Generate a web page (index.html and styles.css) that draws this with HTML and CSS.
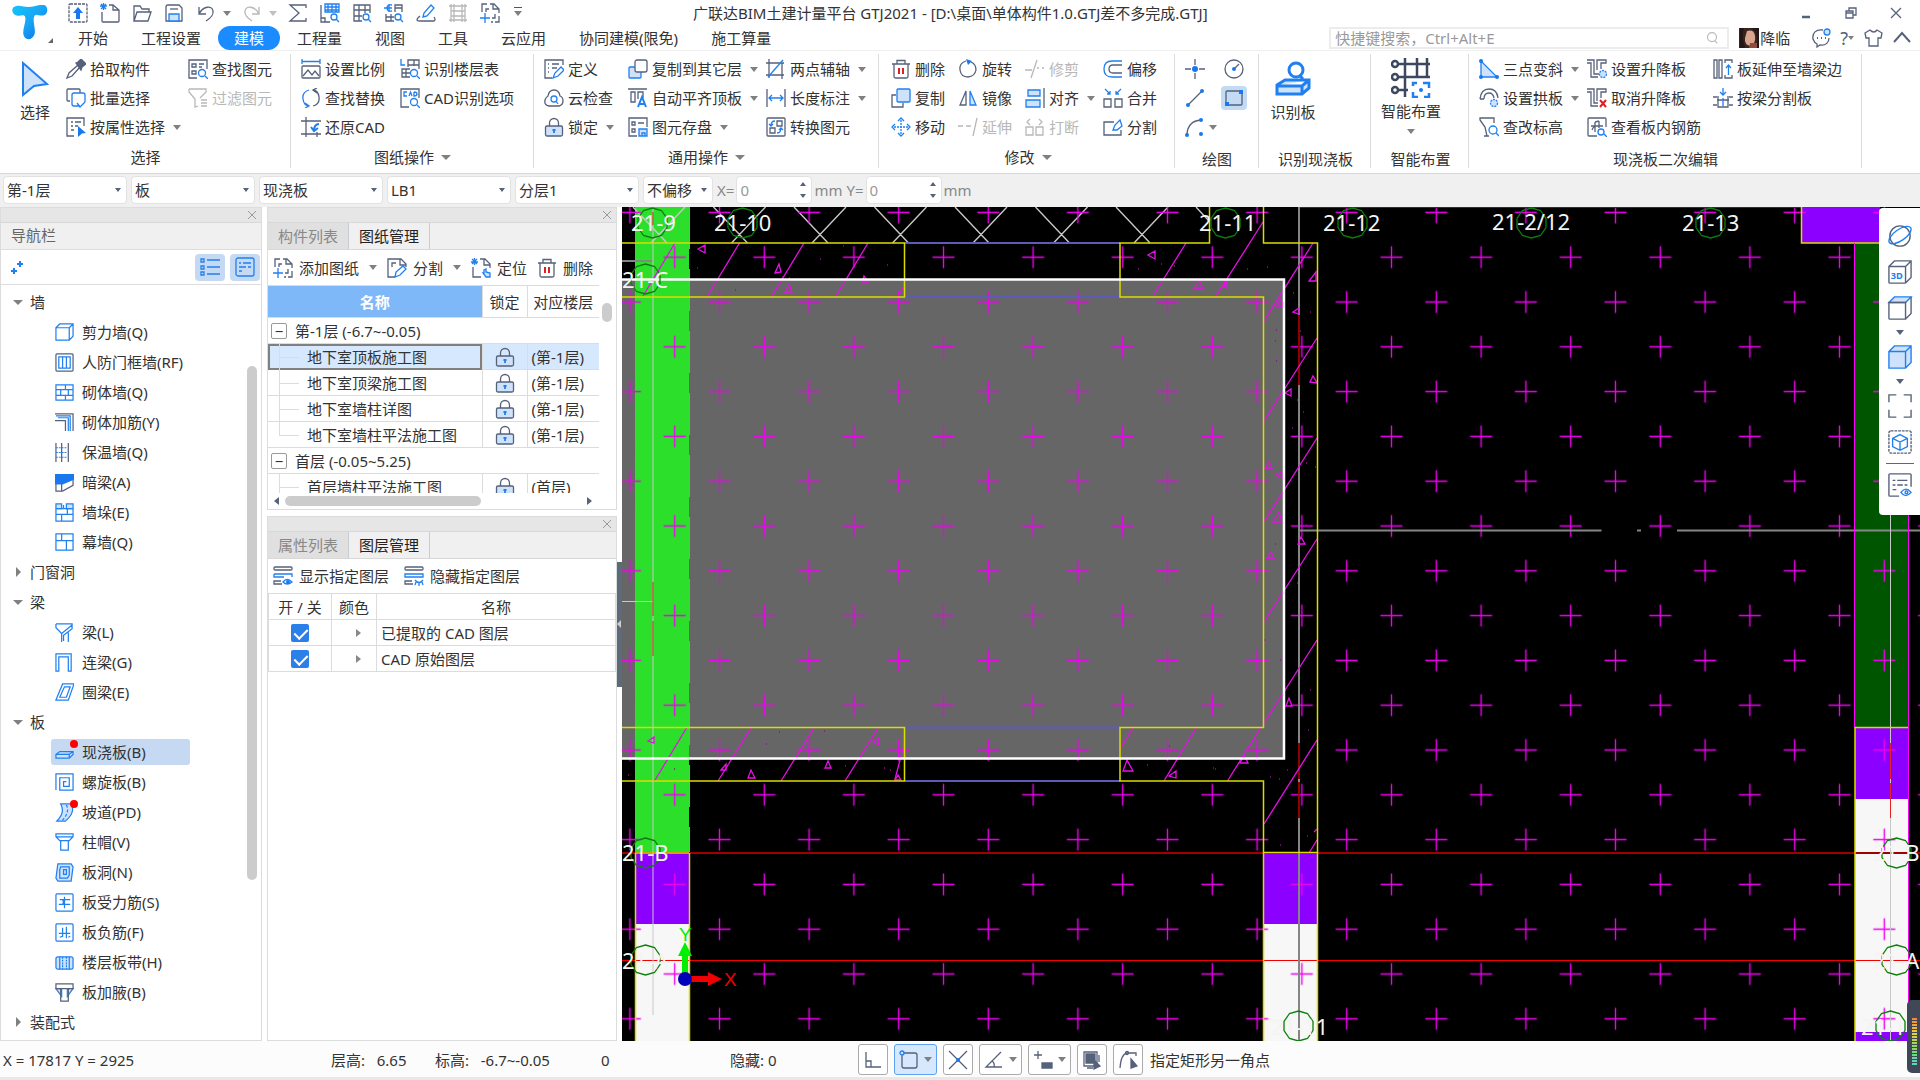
FILE: index.html
```html
<!DOCTYPE html>
<html lang="zh-CN">
<head>
    <meta charset="UTF-8">
    <meta name="viewport" content="width=device-width, initial-scale=1.0">
    <title>广联达BIM土建计量平台 GTJ2021</title>
    <link rel="stylesheet" href="styles.css">
</head>
<body>

    <!-- Shared icons -->
    <svg class="sprite" aria-hidden="true">
        <symbol id="i-lock" viewBox="0 0 20 20"><path d="M5.500 9V6a4.500 4.500 0 0 1 9 0v3"/><rect class="pale" x="1.500" y="9" width="17" height="10" rx="1.500"/><path class="b" stroke-width="1.800" d="M10 12v4M8.500 13h3"/></symbol>
        <symbol id="i-trash" viewBox="0 0 20 20"><path d="M1 5h18M6 5V1.500h8V5M3 5v12.500q0 1.500 1.500 1.500h11q1.500 0 1.500-1.500V5"/><path class="r" d="M8 9v6M12 9v6"/></symbol>
        <symbol id="i-addpage" viewBox="0 0 20 20"><path d="M2 9V1h5M10 1h4l5 5v4M13 1v5h6M19 13v6h-4M13 19h-2M6 9V6h3M15 11v4h-3"/><path class="b" d="M0 15h10M5 10v10"/></symbol>
        <symbol id="i-close" viewBox="0 0 10 10"><path d="M1 1l8 8M9 1L1 9"/></symbol>
    </svg>

    <!-- Title and menu -->
    <header class="top">
        <a class="logo" href="#" aria-label="GTJ">
            <svg viewBox="0 0 38 38">
                <defs><linearGradient id="logo-fill" x1="0" y1="0" x2="1" y2="1"><stop offset="0" stop-color="#15c5f8"/><stop offset=".5" stop-color="#18a5f5"/><stop offset="1" stop-color="#0867f0"/></linearGradient></defs>
                <path fill="url(#logo-fill)" d="M2 2C7-1 12 2 17 2 24 2 29-1 34 0c5 2 4 10-1 11-4 1-7-2-9 0-3 4 1 14 0 19-2 8-11 8-12 1-1-6 3-13 2-18-1-4-5-1-9-2C0 10-1 4 2 2z"/>
            </svg>
        </a>
        <div class="top-rows">
            <div class="titlebar">
                <div class="quick">
                    <button aria-label="上传"><svg class="ico" viewBox="0 0 20 20"><rect x="1" y="1" width="18" height="18" rx="1" stroke-dasharray="3 1"/><path class="bs" d="M10 4l5 6h-3v6H8v-6H5z"/></svg></button>
                    <button aria-label="新建"><svg class="ico" viewBox="0 0 20 20"><path d="M9 2h4l6 5v11q0 1-1 1H3q-1 0-1-1V9M13 2v5h6"/><path class="b" d="M0 3h7M3.500 0v7M1 1l5 5M6 1L1 6"/></svg></button>
                    <button aria-label="打开"><svg class="ico" viewBox="0 0 20 20"><path d="M2 18V3h6l2 3h7v3M2 18L5 9h14l-3 9z"/></svg></button>
                    <button aria-label="保存"><svg class="ico" viewBox="0 0 20 20"><path d="M2 18V4q0-2 2-2h11l3 3v13z"/><path class="bf" d="M5 18v-7h10v7z"/><path d="M6 6h8"/></svg></button>
                    <button aria-label="撤销"><svg class="ico" viewBox="0 0 20 20"><path d="M3 4v7h7M3 11C7 3 16 2 17 8q1 5-7 10"/></svg></button>
                    <i class="caret"></i>
                    <button aria-label="恢复"><svg class="ico off" viewBox="0 0 20 20"><path d="M17 4v7h-7M17 11C13 3 4 2 3 8q-1 5 7 10"/></svg></button>
                    <i class="caret off"></i>
                    <button aria-label="汇总"><svg class="ico" viewBox="0 0 20 20"><path d="M18 5V2H2l9 8-9 8h16v-3"/></svg></button>
                    <button aria-label="查看工程量"><svg class="ico" viewBox="0 0 20 20"><path d="M1 2v17h9M1 15h4v4"/><path class="b" d="M5 1h14v8H5zM5 4h14M5 7h14M8 1v8M12 1v8M16 1v8"/><circle class="b" cx="14" cy="14" r="3"/><path class="b" d="M16 16l3 3"/></svg></button>
                    <button aria-label="表格"><svg class="ico" viewBox="0 0 20 20"><path d="M10 18H2V2h16v8M2 7h16M2 13h8M7 2v16M13 2v8"/><circle class="b" cx="14" cy="14" r="3"/><path class="b" d="M16 16l3 3"/></svg></button>
                    <button aria-label="查看钢筋"><svg class="ico" viewBox="0 0 20 20"><path d="M11 9V2h7v7M2 11v7h8M2 14h8M7 11v7M11 5h7"/><path class="b" d="M0 5h8M5 1v8M8 2q-5-1-5 3t5 3"/><circle class="b" cx="14" cy="14" r="3"/><path class="b" d="M16 16l3 3"/></svg></button>
                    <button aria-label="编辑"><svg class="ico" viewBox="0 0 20 20"><path class="b" d="M7 14l1-4 7-8 3 3-7 8z"/><path d="M4 13q-6 5 0 5h14q2-1 0-4"/></svg></button>
                    <button aria-label="网格"><svg class="ico off" viewBox="0 0 20 20"><path d="M3 1v18M17 1v18M6 1v18M14 1v18M1 3h18M3 8h14M3 13h14M1 17h18"/></svg></button>
                    <button aria-label="添加图纸"><svg class="ico"><use href="#i-addpage"/></svg></button>
                    <i class="caret bar"></i>
                </div>
                <h1>广联达BIM土建计量平台 GTJ2021 - [D:\桌面\单体构件1.0.GTJ差不多完成.GTJ]</h1>
                <div class="winbtns">
                    <button aria-label="最小化"><svg class="ico" viewBox="0 0 20 20"><path stroke-width="2.500" d="M6 14h8"/></svg></button>
                    <button aria-label="还原"><svg class="ico" viewBox="0 0 20 20"><path d="M5 8h7v7H5zM8 8V5h7v7h-3M5 10h7"/></svg></button>
                    <button aria-label="关闭"><svg class="ico" viewBox="0 0 20 20"><path d="M5 5l10 10M15 5L5 15"/></svg></button>
                </div>
            </div>
            <nav class="menu">
                <button>开始</button>
                <button>工程设置</button>
                <button class="active">建模</button>
                <button>工程量</button>
                <button>视图</button>
                <button>工具</button>
                <button>云应用</button>
                <button>协同建模(限免)</button>
                <button>施工算量</button>
                <div class="menu-right">
                    <label class="search">
                        <input type="text" placeholder="快捷键搜索，Ctrl+Alt+E" aria-label="快捷键搜索">
                        <svg class="ico" viewBox="0 0 20 20"><circle cx="10" cy="9" r="5"/><path d="M13 13l3 3"/></svg>
                    </label>
                    <svg class="avatar" viewBox="0 0 20 20"><rect width="20" height="20" fill="#39231f"/><path d="M8 3q7-2 8 5t-4 10q-7-1-6-8z" fill="#d9a48c"/><path d="M5 0q-3 8 1 20H1V0zM16 3q4 8 1 17h3V0h-7z" fill="#241615"/><path d="M11 15h7v5h-8z" fill="#8f4c3c"/></svg>
                    <a class="user" href="#">降临</a>
                    <button aria-label="消息"><svg class="ico" viewBox="0 0 20 20"><path d="M12 2C5 1 1 5 2 11c1 3 2 4 4 5v3l3-2c6 1 9-3 9-7"/><circle class="bf" cx="16" cy="4" r="3"/><path d="M6 10h1M10 10h1M14 10h1" stroke-width="2"/></svg></button>
                    <button class="help">?<i class="caret"></i></button>
                    <button aria-label="皮肤"><svg class="ico" viewBox="0 0 20 20"><path d="M7 2L2 5l1 5h3v8h9v-8h3l1-5-5-3q-3 4-7 0z"/></svg></button>
                    <button aria-label="收起"><svg class="ico" viewBox="0 0 20 20"><path stroke-width="2" d="M2 14l8-9 8 9"/></svg></button>
                </div>
            </nav>
        </div>
    </header>

    <!-- Ribbon -->
    <section class="ribbon">
        <div class="group g-select">
            <div class="group-body">
                <button class="big"><svg viewBox="0 0 28 36"><path class="bf" stroke-width="2" d="M2 2l24 21-13 2-11 9z"/></svg>选择</button>
                <div class="col">
                    <button class="cmd"><svg class="ico" viewBox="0 0 20 20"><path d="M12 6L3 14l-2 5 5-2 8-9"/><path fill="#56617a" d="M10 4l2-1 3-3 5 5-4 3-1 3z"/></svg>拾取构件</button>
                    <button class="cmd"><svg class="ico" viewBox="0 0 20 20"><path d="M4 13H2q-1 0-1-1V2q0-1 1-1h11q1 0 1 1v3"/><path class="b" d="M14 18H8q-2 0-2-2V7q0-2 2-2h9q2 0 2 2v7M11 15l3 4 5-5"/></svg>批量选择</button>
                    <button class="cmd"><svg class="ico" viewBox="0 0 20 20"><path d="M8 19H1V1h17v8M5 5h2M9 5h6M5 9h2M9 9h3M5 13h3"/><path class="bs" d="M12 9l8 7-4 .5-4 3.500z"/></svg>按属性选择<i class="caret"></i></button>
                </div>
                <div class="col">
                    <button class="cmd"><svg class="ico" viewBox="0 0 20 20"><path d="M9 19H1V1h18v9M4 5h4v3H4zM4 12h4v3H4zM11 5h5M11 8h3"/><circle class="b" cx="14" cy="14" r="3.500"/><path class="b" d="M17 17l3 3"/></svg>查找图元</button>
                    <button class="cmd off" disabled><svg class="ico" viewBox="0 0 20 20"><path d="M1 1h17v3l-6 6M1 1v3l6 7v8l3-1M13 12h6M13 15h6M13 18h6"/></svg>过滤图元</button>
                </div>
            </div>
            <div class="group-label">选择</div>
        </div>

        <div class="group g-sheet">
            <div class="group-body">
                <div class="col">
                    <button class="cmd"><svg class="ico" viewBox="0 0 20 20"><path class="b" d="M1 0v5M19 0v5M1 2.500h18"/><rect x="1" y="7" width="18" height="12" rx="1"/><path d="M2 17l5-6 4 5 3-4 4 5"/></svg>设置比例</button>
                    <button class="cmd"><svg class="ico" viewBox="0 0 20 20"><path class="b" d="M8 2Q1 4 2 11t6 7M4 15l4 3-4 2"/><path d="M12 18q7-2 6-9t-6-7M16 5l-4-3 4-2"/></svg>查找替换</button>
                    <button class="cmd"><svg class="ico" viewBox="0 0 20 20"><path d="M5 0v20M0 4h20M0 17h20M16 15v5"/><path class="b" stroke-width="2" d="M18 7q-5 0-5 7M10 10l3 4 4-3"/></svg>还原CAD</button>
                </div>
                <div class="col">
                    <button class="cmd"><svg class="ico" viewBox="0 0 20 20"><path class="b" d="M1 0v6h4"/><path d="M8 8V1h11v9M8 6h11M14 1v6M10 18H2v-8h8M2 14h8M6 10v8"/><circle class="b" cx="14" cy="14" r="3.500"/><path class="b" d="M17 17l3 3"/></svg>识别楼层表</button>
                    <button class="cmd"><svg class="ico" viewBox="0 0 20 20"><path d="M9 19H1V1h18v9"/><path class="b" d="M7 4H4v4h3M9 8l1.500-4L12 8M14 4v4q3 0 3-2t-3-2"/><circle class="b" cx="14" cy="14" r="3.500"/><path class="b" d="M17 17l3 3"/></svg>CAD识别选项</button>
                </div>
            </div>
            <div class="group-label">图纸操作<i class="caret"></i></div>
        </div>

        <div class="group g-common">
            <div class="group-body">
                <div class="col">
                    <button class="cmd"><svg class="ico" viewBox="0 0 20 20"><path d="M8 19H1V1h18v5M4 5h1M8 5h7M4 9h1M8 9h5M4 13h1"/><path class="b" d="M9 19l2-5 6-6 3 3-6 6z"/></svg>定义</button>
                    <button class="cmd"><svg class="ico" viewBox="0 0 20 20"><path d="M5 18Q0 17 1 12q1-3 3-4 1-6 6-6t6 6q3 1 3 5t-4 5z"/><circle class="b" cx="10" cy="11" r="3"/><path class="b" d="M12 13l2 3"/></svg>云检查</button>
                    <button class="cmd"><svg class="ico"><use href="#i-lock"/></svg>锁定<i class="caret"></i></button>
                </div>
                <div class="col">
                    <button class="cmd"><svg class="ico" viewBox="0 0 20 20"><rect class="bf" x="1" y="8" width="12" height="11" rx="1"/><rect x="7" y="1" width="12" height="12" rx="2" fill="#fff"/></svg>复制到其它层<i class="caret"></i></button>
                    <button class="cmd"><svg class="ico" viewBox="0 0 20 20"><path d="M0 1h19M3 4h4v10H3zM10 11V4h5v6"/><path class="b" stroke-width="2" d="M10 19l4-10 4 10M12 16h4"/></svg>自动平齐顶板<i class="caret"></i></button>
                    <button class="cmd"><svg class="ico" viewBox="0 0 20 20"><path d="M9 19H1V1h18v9M4 5h3v3H4zM4 12h3v3H4zM10 6h6"/><path class="bf" d="M11 12h8v7h-8zM14 19v-3h3v3"/></svg>图元存盘<i class="caret"></i></button>
                </div>
                <div class="col">
                    <button class="cmd"><svg class="ico" viewBox="0 0 20 20"><path d="M3 0v19M0 4h18M16 4v16M0 16h18"/><path class="b" d="M2 18L17 1"/></svg>两点辅轴<i class="caret"></i></button>
                    <button class="cmd"><svg class="ico" viewBox="0 0 20 20"><path d="M1 1v18M19 1v18"/><path class="b" d="M3 10h14M6 7l-3 3 3 3M14 7l3 3-3 3"/></svg>长度标注<i class="caret"></i></button>
                    <button class="cmd"><svg class="ico" viewBox="0 0 20 20"><rect x="1" y="1" width="18" height="18" rx="1"/><path d="M11 4h5v5h-5zM4 11h5v5H4z"/><path class="b" d="M9 4Q5 4 5 9M3 7l2 2 2-2M11 16q4 0 4-5M13 13l2-2 2 2"/></svg>转换图元</button>
                </div>
            </div>
            <div class="group-label">通用操作<i class="caret"></i></div>
        </div>

        <div class="group g-modify">
            <div class="group-body">
                <div class="col">
                    <button class="cmd"><svg class="ico"><use href="#i-trash"/></svg>删除</button>
                    <button class="cmd"><svg class="ico" viewBox="0 0 20 20"><path d="M5 7H1v12h11v-4"/><rect class="bf" x="6" y="1" width="13" height="13" rx="1"/></svg>复制</button>
                    <button class="cmd"><svg class="ico" viewBox="0 0 20 20"><path class="b" stroke-dasharray="2 1" d="M10 3v14M3 10h14"/><path class="b" d="M7 4l3-3 3 3M7 16l3 3 3-3M4 7l-3 3 3 3M16 7l3 3-3 3"/></svg>移动</button>
                </div>
                <div class="col">
                    <button class="cmd"><svg class="ico" viewBox="0 0 20 20"><path d="M8 2Q1 4 2 11t8 7q7-1 8-7 0-6-5-8"/><path class="bs" d="M8 0l6 2-4 4z"/></svg>旋转</button>
                    <button class="cmd"><svg class="ico" viewBox="0 0 20 20"><path d="M8 3v14H2z"/><path class="bf" d="M12 3v14h6z"/></svg>镜像</button>
                    <button class="cmd off" disabled><svg class="ico" viewBox="0 0 20 20"><path d="M0 9h5M8 9h5M19 1l-4 18"/></svg>延伸</button>
                </div>
                <div class="col">
                    <button class="cmd off" disabled><svg class="ico" viewBox="0 0 20 20"><path d="M0 11h7M12 1L6 19M12 9h2M17 9h2"/></svg>修剪</button>
                    <button class="cmd"><svg class="ico" viewBox="0 0 20 20"><path class="bf" d="M3 2h12v6H3zM1 12h14v7H1z"/><path d="M19 0v20"/></svg>对齐<i class="caret"></i></button>
                    <button class="cmd off" disabled><svg class="ico" viewBox="0 0 20 20"><path d="M1 10h7v8H1zM11 10h7v8h-7zM5 2L2 5l3 3M14 2l3 3-3 3"/></svg>打断</button>
                </div>
                <div class="col">
                    <button class="cmd"><svg class="ico" viewBox="0 0 20 20"><path class="b" d="M19 2H9Q1 2 1 10t8 8h10"/><path d="M19 6h-9q-4 0-4 4t4 4h9"/></svg>偏移</button>
                    <button class="cmd"><svg class="ico" viewBox="0 0 20 20"><path d="M1 11h7v8H1zM12 11h7v8h-7z"/><path class="b" d="M2 1l5 5M7 3v3H4M18 1l-5 5M13 3v3h3"/></svg>合并</button>
                    <button class="cmd"><svg class="ico" viewBox="0 0 20 20"><path d="M11 5H1v13h17v-5"/><path class="b" d="M10 13l2-5 5-5 2 6-5 4z"/></svg>分割</button>
                </div>
            </div>
            <div class="group-label">修改<i class="caret"></i></div>
        </div>

        <div class="group g-draw">
            <div class="group-body">
                <div class="col">
                    <button class="cmd" aria-label="点"><svg class="ico" viewBox="0 0 20 20"><path d="M0 10h6M14 10h6M10 0v6M10 14v6"/><circle class="bs" cx="10" cy="10" r="3"/></svg></button>
                    <button class="cmd" aria-label="直线"><svg class="ico" viewBox="0 0 20 20"><path d="M3 17L17 3"/><circle class="bs" cx="3" cy="17" r="2"/><circle class="bs" cx="17" cy="3" r="2"/></svg></button>
                    <button class="cmd" aria-label="弧线"><svg class="ico" viewBox="0 0 20 20"><path d="M2 17Q3 4 16 3"/><circle class="bs" cx="2" cy="18" r="2"/><circle class="bs" cx="16" cy="3" r="2"/><circle class="bs" cx="16" cy="17" r="2"/></svg><i class="caret"></i></button>
                </div>
                <div class="col">
                    <button class="cmd" aria-label="圆"><svg class="ico" viewBox="0 0 20 20"><circle cx="10" cy="10" r="9"/><path d="M10 10l5-5"/><circle class="bs" cx="10" cy="10" r="2"/></svg></button>
                    <button class="cmd on" aria-label="矩形"><svg class="ico" viewBox="0 0 20 20"><rect x="2" y="3" width="16" height="14" rx="1"/><path class="bs" d="M1 14h4v4H1zM15 2h4v4h-4z"/></svg></button>
                </div>
            </div>
            <div class="group-label low">绘图</div>
        </div>

        <div class="group g-detect">
            <div class="group-body">
                <button class="big"><svg viewBox="0 0 36 36"><g class="b" stroke-width="3"><circle cx="21" cy="9" r="7"/><path d="M24 14l4 4"/><path class="bf" d="M2 24l8-5h24v8l-7 6H2zM2 25h25l7-6M27 25v8"/></g></svg>识别板</button>
            </div>
            <div class="group-label low">识别现浇板</div>
        </div>

        <div class="group g-smart">
            <div class="group-body">
                <button class="big"><svg viewBox="0 0 40 40"><g stroke="#3d4860" stroke-width="2.500"><path d="M5 6h34M5 19h34M5 32h12M14 0v39M26 0v20M36 0v19"/><circle cx="4" cy="6" r="3" fill="#fff"/><circle cx="4" cy="19" r="3" fill="#fff"/><circle cx="4" cy="32" r="3" fill="#fff"/></g><path class="b" stroke-width="2.500" d="M22 28v-3h4M32 25h6v5M38 35v4h-5M27 39h-5v-5"/><circle class="bs" cx="30" cy="32" r="2"/></svg>智能布置<i class="caret"></i></button>
            </div>
            <div class="group-label low">智能布置</div>
        </div>

        <div class="group g-slab">
            <div class="group-body">
                <div class="col">
                    <button class="cmd"><svg class="ico" viewBox="0 0 20 20"><path class="bf" d="M2 2v16h16z"/><circle class="bs" cx="2" cy="2" r="2"/><circle class="bs" cx="2" cy="18" r="2"/><circle class="bs" cx="18" cy="18" r="2"/></svg>三点变斜<i class="caret"></i></button>
                    <button class="cmd"><svg class="ico" viewBox="0 0 20 20"><path d="M1 11Q2 1 10 1t9 9M5 11q0-6 5-6 4 0 5 5M1 11h4"/><circle class="bf" cx="15" cy="15" r="3.500" stroke-dasharray="2 1"/></svg>设置拱板<i class="caret"></i></button>
                    <button class="cmd"><svg class="ico" viewBox="0 0 20 20"><path d="M8 19l-2-9-5-7V1h14v5M5 19h5"/><circle class="b" cx="14" cy="13" r="4"/><path class="b" d="M17 16l3 3"/></svg>查改标高</button>
                </div>
                <div class="col">
                    <button class="cmd"><svg class="ico" viewBox="0 0 20 20"><path d="M0 1h7v14h5M0 4h4v14h7M10 11V1h9v3h-5v6"/><circle class="bf" cx="16" cy="15" r="3.500" stroke-dasharray="2 1"/></svg>设置升降板</button>
                    <button class="cmd"><svg class="ico" viewBox="0 0 20 20"><path d="M0 1h7v14h4M0 4h4v14h7M10 13V1h9v3h-5v6"/><path class="r" d="M13 12l6 7M19 12l-6 7"/></svg>取消升降板</button>
                    <button class="cmd"><svg class="ico" viewBox="0 0 20 20"><path d="M10 19H2q-1 0-1-1V2q0-1 1-1h16q1 0 1 1v8M4 9h12M8 5v10M12 4v7M8 5l4-1M5 13q2-5 6-4"/><circle class="b" cx="14" cy="15" r="3"/><path class="b" d="M17 17l3 3"/></svg>查看板内钢筋</button>
                </div>
                <div class="col">
                    <button class="cmd"><svg class="ico" viewBox="0 0 20 20"><path d="M1 1h3v18H1zM6 1h3v18H6zM12 4V1h7v3M12 16v3h7v-3"/><path class="b" d="M15.500 16V6M13 9l2.500-3L18 9"/></svg>板延伸至墙梁边</button>
                    <button class="cmd"><svg class="ico" viewBox="0 0 20 20"><path d="M0 9h4M16 9h4M0 17h4M16 17h4M5 8v11h10V8M4 12h12"/><path class="b" d="M10 0v6M7 4l3 3 3-3M10 10v8"/></svg>按梁分割板</button>
                </div>
            </div>
            <div class="group-label low">现浇板二次编辑</div>
        </div>
    </section>

    <!-- Component pickers -->
    <section class="options">
        <div class="pick"><select aria-label="楼层"><option>第-1层</option></select></div>
        <div class="pick"><select aria-label="类别"><option>板</option></select></div>
        <div class="pick"><select aria-label="构件类型"><option>现浇板</option></select></div>
        <div class="pick"><select aria-label="构件"><option>LB1</option></select></div>
        <div class="pick"><select aria-label="分层"><option>分层1</option></select></div>
        <div class="pick short"><select aria-label="偏移"><option>不偏移</option></select></div>
        <div class="offset"><label for="off-x">X=</label><span class="spin"><input id="off-x" type="text" value="0"></span>mm</div>
        <div class="offset"><label for="off-y">Y=</label><span class="spin"><input id="off-y" type="text" value="0"></span>mm</div>
    </section>

    <main class="work">
        <!-- Navigation tree -->
        <aside class="panel navpanel">
            <div class="strip"><button aria-label="关闭"><svg><use href="#i-close"/></svg></button></div>
            <h2>导航栏</h2>
            <div class="navtools">
                <button class="plus" aria-label="添加"><svg class="ico" viewBox="0 0 20 20"><path class="b" stroke-width="2" d="M6 11v6M3 14h6M12 4v6M9 7h6"/></svg></button>
                <button class="toggle" aria-label="列表"><svg class="ico" viewBox="0 0 20 20"><path class="b" d="M7 3h13M7 10h13M7 17h13M1 2h3v3H1zM1 9h3v3H1zM1 15h3v3H1z"/></svg></button>
                <button class="toggle" aria-label="详情"><svg class="ico" viewBox="0 0 20 20"><rect class="b" x="1" y="1" width="18" height="18" rx="2"/><path class="b" d="M4 6h2M8 6h8M4 10h7M13 10h3M4 14h3"/></svg></button>
            </div>
            <ul class="tree">
                <li><button class="open">墙</button>
                    <ul>
                        <li><a href="#"><svg class="ico" viewBox="0 0 20 20"><path class="b" d="M1 5h14v13H1zM1 5l4-4h14v13l-4 4M15 5l4-4"/></svg>剪力墙(Q)</a></li>
                        <li><a href="#"><svg class="ico" viewBox="0 0 20 20"><rect x="1" y="1" width="18" height="18" rx="1"/><path class="b" d="M4 4h12v12H4zM8 4v12M12 4v12"/></svg>人防门框墙(RF)</a></li>
                        <li><a href="#"><svg class="ico" viewBox="0 0 20 20"><path class="b" d="M1 2h18v16H1zM1 7h18M1 13h18M11 2v5M6 7v6M14 7v6M11 13v5"/></svg>砌体墙(Q)</a></li>
                        <li><a href="#"><svg class="ico" viewBox="0 0 20 20"><path d="M0 1h19v18M0 8h11v11"/><path class="b" d="M1 3h15v16M3 5h11v14"/></svg>砌体加筋(Y)</a></li>
                        <li><a href="#"><svg class="ico" viewBox="0 0 20 20"><path d="M1 0v20M7 0v20M14 0v20"/><path class="b" stroke-dasharray="2 1" d="M1 5h12M1 10h12M1 15h12"/></svg>保温墙(Q)</a></li>
                        <li><a href="#"><svg class="ico" viewBox="0 0 20 20"><path d="M1 11v8h7l11-6V7M7 11v8"/><path class="bs" d="M0 1h20v6L8 12H0z"/></svg>暗梁(A)</a></li>
                        <li><a href="#"><svg class="ico" viewBox="0 0 20 20"><path class="bf" d="M1 1h6v5H1zM12 1h7v5h-7z"/><path class="b" d="M1 6v13h18V6M1 6h18M1 12h18M9 2v4M7 12v7M13 6v6"/></svg>墙垛(E)</a></li>
                        <li><a href="#"><svg class="ico" viewBox="0 0 20 20"><path class="b" d="M1 1h18v17H1zM1 8h18M7 1v7M12 8v10"/></svg>幕墙(Q)</a></li>
                    </ul>
                </li>
                <li><button>门窗洞</button></li>
                <li><button class="open">梁</button>
                    <ul>
                        <li><a href="#"><svg class="ico" viewBox="0 0 20 20"><path class="b" d="M1 1h17v5l-9 7v6M1 1v4l6 6v9M18 2L7 11M14 10v10"/></svg>梁(L)</a></li>
                        <li><a href="#"><svg class="ico" viewBox="0 0 20 20"><path class="b" d="M1 19V1h16v18h-3V4H4v15z"/></svg>连梁(G)</a></li>
                        <li><a href="#"><svg class="ico" viewBox="0 0 20 20"><path class="b" d="M1 18L8 1h12l-6 17zM5 15l5-11h6l-4 11z"/></svg>圈梁(E)</a></li>
                    </ul>
                </li>
                <li><button class="open">板</button>
                    <ul>
                        <li class="selected"><a href="#"><svg class="ico" viewBox="0 0 20 20"><path class="bf" d="M1 12l4-3h14v3l-4 4H1zM1 12h14l4-3M15 12v4"/></svg><b class="dot"></b>现浇板(B)</a></li>
                        <li><a href="#"><svg class="ico" viewBox="0 0 20 20"><path class="b" d="M1 18V1h18v17H5V5h10v9H9v-5h3"/></svg>螺旋板(B)</a></li>
                        <li><a href="#"><svg class="ico" viewBox="0 0 20 20"><path class="bf" d="M6 1q5 9-4 18h9q11-9 6-18z"/><path class="b" stroke-dasharray="3 2" d="M12 2q4 8-5 17"/></svg><b class="dot"></b>坡道(PD)</a></li>
                        <li><a href="#"><svg class="ico" viewBox="0 0 20 20"><path class="b" d="M1 1h18v3l-4 4H5L1 4zM1 4h18M6 8v10h8V8"/></svg>柱帽(V)</a></li>
                        <li><a href="#"><svg class="ico" viewBox="0 0 20 20"><path class="bf" d="M3 1h14l2 3-2 15H3l-2-3z"/><path class="b" d="M6 4h9v9l-2 3H5V7zM9 7h3v5H9z"/></svg>板洞(N)</a></li>
                        <li><a href="#"><svg class="ico" viewBox="0 0 20 20"><rect class="b" x="1" y="1" width="18" height="18" rx="1"/><path class="b" d="M5 7h11M4 12h12M10 4v12M8 7q2 3 0 5"/></svg>板受力筋(S)</a></li>
                        <li><a href="#"><svg class="ico" viewBox="0 0 20 20"><rect class="b" x="1" y="1" width="18" height="18" rx="1"/><path class="b" d="M4 11h12M8 5v9l-3 1M12 4v12M14 15l2-1"/></svg>板负筋(F)</a></li>
                        <li><a href="#"><svg class="ico" viewBox="0 0 20 20"><rect class="bf" x="1" y="4" width="18" height="13" rx="2"/><path class="b" d="M5 4v13M15 4v13"/><path class="b" stroke-dasharray="2 1" d="M8 4v13M12 4v13"/></svg>楼层板带(H)</a></li>
                        <li><a href="#"><svg class="ico" viewBox="0 0 20 20"><path class="bf" d="M1 6l6 8V6zM19 6l-6 8V6z"/><path d="M1 1h18v5H1zM6 6v13h8V6"/></svg>板加腋(B)</a></li>
                    </ul>
                </li>
                <li><button>装配式</button></li>
            </ul>
            <div class="vthumb"></div>
        </aside>

        <div class="side">
            <!-- Drawing management -->
            <section class="panel sheets">
                <div class="strip"><button aria-label="关闭"><svg><use href="#i-close"/></svg></button></div>
                <div class="tabs"><button>构件列表</button><button class="active">图纸管理</button></div>
                <div class="tools">
                    <button class="cmd"><svg class="ico"><use href="#i-addpage"/></svg>添加图纸<i class="caret"></i></button>
                    <button class="cmd"><svg class="ico" viewBox="0 0 20 20"><path d="M8 19H1V1h13l5 5v3M13 1v6h6M5 9V5h4"/><path class="b" d="M8 19l1-5 7-6 3 3-6 6z"/></svg>分割<i class="caret"></i></button>
                    <button class="cmd"><svg class="ico" viewBox="0 0 20 20"><path d="M9 1h5l5 5v4M13 1v6h6M2 9v10h8"/><path class="b" d="M0 4h7M3.500 0v7M1 1l5 5M6 1L1 6"/><path class="bf" d="M13 12v3h-1l3 4h4v-4l-4-1v-3z"/></svg>定位</button>
                    <button class="cmd"><svg class="ico"><use href="#i-trash"/></svg>删除</button>
                </div>
                <div class="sheet-scroll">
                    <table class="sheet-table">
                        <colgroup><col class="c-name"><col class="c-lock"><col></colgroup>
                        <thead>
                            <tr><th class="sorted">名称</th><th>锁定</th><th>对应楼层</th></tr>
                        </thead>
                        <tbody>
                            <tr class="floor"><td colspan="3"><button class="fold">−</button>第-1层 (-6.7~-0.05)</td></tr>
                            <tr class="current"><td>地下室顶板施工图</td><td><svg class="ico"><use href="#i-lock"/></svg></td><td>(第-1层)</td></tr>
                            <tr><td>地下室顶梁施工图</td><td><svg class="ico"><use href="#i-lock"/></svg></td><td>(第-1层)</td></tr>
                            <tr><td>地下室墙柱详图</td><td><svg class="ico"><use href="#i-lock"/></svg></td><td>(第-1层)</td></tr>
                            <tr class="last"><td>地下室墙柱平法施工图</td><td><svg class="ico"><use href="#i-lock"/></svg></td><td>(第-1层)</td></tr>
                            <tr class="floor"><td colspan="3"><button class="fold">−</button>首层 (-0.05~5.25)</td></tr>
                            <tr><td>首层墙柱平法施工图</td><td><svg class="ico"><use href="#i-lock"/></svg></td><td>(首层)</td></tr>
                        </tbody>
                    </table>
                    <div class="vbar"></div>
                </div>
                <div class="hbar"><i class="left"></i><span></span><i class="right"></i></div>
            </section>

            <!-- Layer management -->
            <section class="panel layers">
                <div class="strip"><button aria-label="关闭"><svg><use href="#i-close"/></svg></button></div>
                <div class="tabs"><button>属性列表</button><button class="active">图层管理</button></div>
                <div class="tools">
                    <button class="cmd"><svg class="ico" viewBox="0 0 20 20"><rect x="1" y="1" width="18" height="3" rx="1"/><path d="M9 18H1v-3h7"/><path class="b" d="M1 8h18v3M1 8v3h10M10 16q4-5 9 0-5 4-9 0z"/><circle class="bs" cx="15" cy="16" r="2"/></svg>显示指定图层</button>
                    <button class="cmd"><svg class="ico" viewBox="0 0 20 20"><rect x="1" y="1" width="18" height="3" rx="1"/><path d="M9 18H1v-3h7"/><path class="b" d="M1 8h18v3H1zM11 14q4 5 8 0M12 16l-1 3M15 17v3M18 16l1 3"/></svg>隐藏指定图层</button>
                </div>
                <table class="layer-table">
                    <colgroup><col class="c-on"><col class="c-color"><col></colgroup>
                    <thead>
                        <tr><th>开 / 关</th><th>颜色</th><th>名称</th></tr>
                    </thead>
                    <tbody>
                        <tr><td><input type="checkbox" id="ly1" checked></td><td><i class="fold-arrow"></i></td><td><label for="ly1">已提取的 CAD 图层</label></td></tr>
                        <tr><td><input type="checkbox" id="ly2" checked></td><td><i class="fold-arrow"></i></td><td><label for="ly2">CAD 原始图层</label></td></tr>
                    </tbody>
                </table>
            </section>
        </div>

        <div class="splitter"><button aria-label="收起面板"></button></div>

        <!-- Drawing area -->
        <div class="stage">
            <svg class="plan" viewBox="622 207 1298 834" preserveAspectRatio="xMinYMin slice">
                <defs>
                    <pattern id="cross" patternUnits="userSpaceOnUse" x="1324.300" y="279.600" width="89.600" height="89.600">
                        <path d="M11.400 22.400h22M22.400 11.400v22M56.200 67.200h22M67.200 56.200v22" stroke="#f000f0" stroke-width="1.400" fill="none"/>
                    </pattern>
                </defs>
                <rect x="622" y="207" width="1298" height="834" fill="#000"/>
                <rect x="622" y="279" width="662" height="480" fill="#666"/>

                <!-- beams and columns -->
                <rect x="635" y="207" width="54" height="646" fill="#2bdf2b"/>
                <path d="M635.500 207v646M689.500 207v646" stroke="#00d8d8" stroke-dasharray="42 20"/>
                <g fill="#f7f7f7">
                    <rect x="635" y="924" width="54" height="117"/>
                    <rect x="1263" y="924" width="54" height="117"/>
                    <rect x="1855" y="799" width="54" height="242"/>
                </g>
                <rect x="1855" y="243" width="54" height="484" fill="#005500"/>
                <g fill="#8b00ff">
                    <rect x="635" y="853" width="54" height="71"/>
                    <rect x="1263" y="853" width="54" height="71"/>
                    <rect x="1801" y="207" width="79" height="36"/>
                    <rect x="1855" y="727" width="54" height="72"/>
                    <rect x="1855" y="1032" width="54" height="9"/>
                </g>

                <!-- truss -->
                <path class="truss" d="M633 207l34 36M685 207l-34 36M713.500 207l34 36M765.500 207l-34 36M794 207l34 36M846 207l-34 36M874.500 207l34 36M926.500 207l-34 36M955 207l34 36M1007 207l-34 36M1035.500 207l34 36M1087.500 207l-34 36M1116 207l34 36M1168 207l-34 36M1196 207l13 14"/>

                <rect x="622" y="207" width="1298" height="834" fill="url(#cross)"/>

                <!-- axes -->
                <path stroke="#a00000" stroke-width="2" d="M622 853h1298M1299 207h502"/>
                <path stroke="#f00000" d="M622 960.500h1298"/>
                <path stroke="#858585" stroke-width="2" d="M1299 207v834M1299 530.500h302.500M1637 530.500h4M1677 530.500h243M622 261h31"/>
                <path stroke="#c8c8c8" d="M653 207v808M622 601.500h31M1890.500 514v527"/>
                <path stroke="#900000" stroke-width="2" d="M1299 315v70M1299 743v36M1299 782v36"/>
                <path stroke="#e82020" d="M653 212v13M653 582v34M653 621v35M1890.500 743v36M1890.500 783v35"/>

                <!-- concrete hatch -->
                <g class="hatch">
                    <path d="M675 243l-32 53M739.500 243l-32 53M804 243l-32 53M868 243l-32 53M904.500 285l-6 11M1186 243l-33 53M1263 222l-47 74M1313 243l-49 78M1317 338l-53 83M1317 438l-53 84M1317 539l-53 83M1317 640l-53 83M1317 740l-53 84M1317 840l-8 13"/>
                    <path d="M686.500 728l-32 53M751 728l-33 53M814 728l-33 53M878 728l-33 53M904.500 743l-10 38M1133 728l-13 21M1196 728l-32 53M1260.500 728l-33 53"/>
                    <path d="M698 249l7-4 0 8zM775 273l6-1-2-8zM785 292l7 0-3-8zM862 282l6 0-4-6zM1148 255l7-4 0 8zM1194 289l9 0-4-9zM1223 286l4-5 0 7zM1309 281l7 0v-9zM1277 306l6 0-2-7zM1293 312l6-4 0 6zM1310 382l7 1-4-7zM1285 393l6-4 0 7zM1265 468l7 0-3-6zM1276 475l6-3 0 6zM1273 522l9 0-3-10zM1298 544l7 0-4-7zM1267 558l7 0-3-6z"/>
                    <path d="M648 741l6-4 0 6zM721 770l5-6 0 6zM748 778l7 0-4-8zM825 768l6 0-3-7zM873 742l6-4 0 7zM895 780l6 0-3-5zM1123 771l10 0-6-11zM1169 776l7-5 0 7zM1240 763l8 0-4-9zM1286 706l6 0-3-8zM1314 832l3-3"/>
                    <path class="specks" d="M697 268h1M735 290h1M782 277h1M789 278h1M820 259h1M843 246h1M887 265h1M1138 269h1M1161 264h1M1174 266h1M1247 269h1M1267 267h1M1293 293h1M1310 312h1M1276 330h1M1275 341h1M1276 361h1M1300 331h1M1297 400h1M1303 412h1M1292 428h1M1263 429h1M1306 463h1M1315 467h1M1306 525h1M1275 544h1M1297 583h1M628 775h1M674 769h1M728 764h1M766 744h1M779 732h1M824 731h1M845 766h1M884 768h1M890 770h1M1147 765h1M1169 746h1M1213 768h1M1215 769h1M1270 777h1M1279 779h1M1308 730h1M1280 845h1M1307 836h1M1287 770h1M1264 640h1M1280 660h1M1310 690h1"/>
                </g>

                <!-- wall outlines -->
                <path class="window" d="M905 243h215M905 297h215M905 727.500h215M905 781h215"/>
                <path class="wall" d="M622 243h282.500v54H622M1209.500 207v36H1120v54h143.500v430.500H1120V781h143.500v260M1263.500 207v36h54v798M622 727.500h282.500V781H622M635.500 853v188M689.500 853v188M1263 852.500h54M635 853h54M1801.500 207v36H1880M1855 727.500h54M1855 727v314"/>
                <path stroke="#f0f" d="M1854.500 243v484M1908.500 514v527"/>
                <path stroke="#fff" stroke-width="2.500" fill="none" d="M622 279.500h662V758.500H622"/>

                <!-- axis bubbles -->
                <g class="bubble">
                    <path id="oct" d="M652.500 208l9 2.500 5.500 8v9l-5.500 8-9 2.500-9-2.500-5.500-8v-9l5.500-8z"/>
                    <use href="#oct" x="90"/><use href="#oct" x="573"/><use href="#oct" x="700"/><use href="#oct" x="879"/><use href="#oct" x="1058"/>
                    <use href="#oct" x="-7" y="56"/><use href="#oct" x="-7" y="630"/><use href="#oct" x="-7" y="737"/><use href="#oct" x="646" y="803"/>
                    <use href="#oct" x="1244" y="630"/><use href="#oct" x="1244" y="737"/><use href="#oct" x="1238" y="803"/>
                </g>
                <g class="axis-name">
                    <text x="631" y="231">21-9</text><text x="714" y="231">21-10</text><text x="1199" y="231">21-11</text><text x="1323" y="231">21-12</text><text x="1492" y="230">21-2/12</text><text x="1682" y="231">21-13</text>
                    <text x="622" y="288">21-C</text><text x="622" y="861">21-B</text><text x="622" y="969">21-A</text><text x="1271" y="1035">21-11</text>
                    <text x="1873" y="861">21-B</text><text x="1873" y="969">21-A</text><text x="1861" y="1035">21-14</text>
                </g>

                <!-- origin -->
                <path fill="#00f000" d="M682 975v-19h-4l7-14 7 14h-4v19z"/>
                <path fill="#f00000" d="M690 976h18v-4l14 7-14 7v-4h-18z"/>
                <circle cx="685" cy="979" r="7" fill="#0000b8"/>
                <text class="ucs" x="679" y="941" fill="#00f000">Y</text>
                <text class="ucs" x="724" y="986" fill="#f00000">X</text>
            </svg>

            <!-- View tools -->
            <div class="viewtools">
                <button aria-label="动态观察"><svg class="ico" viewBox="0 0 26 26"><circle cx="13" cy="13" r="11"/><ellipse class="b" cx="13" cy="12" rx="14" ry="6" transform="rotate(-35 13 12)"/></svg></button>
                <button aria-label="三维"><svg class="ico" viewBox="0 0 26 26"><path d="M1 7h18v17q0 1-1 1H2q-1 0-1-1zM1 7l6-6h18v18l-6 6M19 7l6-6"/><text x="3" y="21">3D</text></svg></button>
                <button aria-label="俯视"><svg class="ico" viewBox="0 0 26 26"><path class="bf" d="M1 7l6-6h18l-6 6z"/><path d="M1 7h18v18H2q-1 0-1-1zM25 1v18l-6 6"/></svg></button>
                <i class="caret"></i>
                <button aria-label="显示模式"><svg class="ico" viewBox="0 0 26 26"><path class="bf" d="M1 7l6-6h18v18l-6 6H1zM1 7h18v18M19 7l6-6"/></svg></button>
                <i class="caret"></i>
                <button aria-label="全屏"><svg class="ico" viewBox="0 0 26 26"><path d="M1 9V1h8M17 1h8v8M25 17v8h-8M9 25H1v-8"/></svg></button>
                <button aria-label="局部三维"><svg class="ico" viewBox="0 0 26 26"><rect x="1" y="1" width="24" height="24" rx="2" stroke-dasharray="3 1"/><path class="b" d="M13 5l8 4v9l-8 4-8-4V9zM5 9l8 4 8-4M13 13v9"/></svg></button>
                <hr>
                <button aria-label="图元显示"><svg class="ico" viewBox="0 0 26 26"><path d="M12 25H2q-1 0-1-1V2q0-1 1-1h22q1 0 1 1v13M5 8h3M10 8h11M5 13h3M10 13h6M18 13h3M5 18h4"/><path class="b" d="M14 21q5-7 11 0-6 7-11 0z"/><circle class="b" cx="20" cy="21" r="1.500"/></svg></button>
            </div>
            <div class="meter"></div>
        </div>
    </main>

    <!-- Status bar -->
    <footer class="status">
        <span class="s-coord">X = 17817 Y = 2925</span>
        <span class="s-height">层高:&nbsp;&nbsp; 6.65</span>
        <span class="s-level">标高:&nbsp;&nbsp; -6.7~-0.05</span>
        <span class="s-zero">0</span>
        <span class="s-hidden">隐藏: 0</span>
        <div class="snaps">
            <button aria-label="正交"><svg class="ico" viewBox="0 0 20 20"><path d="M3 2v15h15M3 11h5v6"/></svg></button>
            <button class="on" aria-label="捕捉"><svg class="ico" viewBox="0 0 20 20"><rect x="3" y="3" width="15" height="15" rx="2"/><circle class="bf" cx="3" cy="3" r="2"/></svg><i class="caret"></i></button>
            <button aria-label="交点"><svg class="ico" viewBox="0 0 20 20"><path d="M1 1l18 18M19 1L1 19"/><circle class="bs" cx="10" cy="10" r="2"/></svg></button>
            <button aria-label="角度"><svg class="ico" viewBox="0 0 20 20"><path d="M17 2L2 17h16M8 11q3 2 2 6"/></svg><i class="caret"></i></button>
            <button aria-label="输入"><svg class="ico" viewBox="0 0 20 20"><path d="M1 5h8M5 1v8"/><path fill="#56617a" d="M9 13h10v5H9z"/></svg><i class="caret"></i></button>
            <button aria-label="选择"><svg class="ico" viewBox="0 0 20 20"><path d="M2 2h13v14H2z"/><path fill="#56617a" d="M4 4h9v9H4z"/><path d="M17 5v7M5 18h6"/><path fill="#56617a" d="M12 10l6 6-6 3z"/></svg></button>
            <button aria-label="折线"><svg class="ico" viewBox="0 0 20 20"><path d="M2 18Q3 4 9 3h9v3"/><circle cx="9" cy="3" r="1.500"/><path fill="#56617a" d="M13 9l6 7-6 2z"/></svg></button>
        </div>
        <span>指定矩形另一角点</span>
    </footer>

</body>
</html>
```

FILE: styles.css
```css
* {
    box-sizing: border-box;
}
body {
    margin: 0;
    height: 100vh;
    display: flex;
    flex-direction: column;
    overflow: hidden;
    background: #fff;
    color: #333;
    font-family: "Noto Sans", "Noto Sans CJK SC", sans-serif;
    font-size: 15px;
    line-height: 20px;
}
button, input, select {
    font: inherit;
    color: inherit;
}
button {
    border: 0;
    padding: 0;
    background: none;
    white-space: nowrap;
}
a {
    color: inherit;
    text-decoration: none;
}
ul {
    list-style: none;
    margin: 0;
    padding: 0;
}
.sprite {
    position: absolute;
    width: 0;
    height: 0;
}

/* icons */
.ico {
    display: block;
    flex: none;
    width: 20px;
    height: 20px;
    fill: none;
    stroke: #56617a;
    stroke-width: 1.3;
}
.b {
    fill: none;
    stroke: #2080f0;
}
.bf {
    fill: #cfe2fc;
    stroke: #2080f0;
}
.bs {
    fill: #1a78ee;
    stroke: none;
}
.r {
    stroke: #e02020;
    stroke-width: 2;
}
.pale {
    fill: #cfe2fc;
}
.off {
    color: #b8b8b8;
    stroke: #b8b8b8;
}
.off .ico {
    stroke: #b8b8b8;
}
.caret {
    flex: none;
    width: 0;
    height: 0;
    border: 4px solid transparent;
    border-top: 5px solid #808080;
    border-bottom: 0;
}
.caret.off {
    border-top-color: #c0c0c0;
}

/* header */
.top {
    display: flex;
    height: 51px;
    flex: none;
    border-bottom: 1px solid #f0f0f0;
}
.logo {
    width: 62px;
    padding: 5px 0 0 11px;
    position: relative;
}
.logo svg {
    width: 38px;
    height: 36px;
}
.logo::after {
    content: "";
    position: absolute;
    right: 9px;
    bottom: 7px;
    border-left: 5px solid transparent;
    border-bottom: 5px solid #666;
}
.top-rows {
    flex: 1;
    min-width: 0;
}
.titlebar {
    display: flex;
    height: 26px;
    align-items: center;
    justify-content: space-between;
}
.quick {
    display: flex;
    align-items: center;
    padding-left: 6px;
    gap: 12px;
    width: 631px;
}
.quick .caret {
    margin: 0 -1px 0 -5px;
}
.quick .bar {
    position: relative;
    margin-left: 2px;
}
.quick .bar::before {
    content: "";
    position: absolute;
    left: -4px;
    top: -9px;
    width: 8px;
    border-top: 1px solid #555;
}
.titlebar h1 {
    margin: 0;
    flex: 1;
    font-size: 15px;
    font-weight: 400;
}
.winbtns {
    display: flex;
    gap: 25px;
    padding-right: 14px;
}
.menu {
    display: flex;
    align-items: center;
    gap: 1px;
    height: 24px;
}
.menu > button {
    height: 24px;
    padding: 0 16px;
    border-radius: 12px;
}
.menu > .active {
    background: #1a8cff;
    color: #fff;
}
.menu-right {
    display: flex;
    align-items: center;
    gap: 9px;
    margin-left: auto;
    padding-right: 8px;
}
.search {
    display: flex;
    align-items: center;
    width: 400px;
    height: 22px;
    margin-right: 1px;
    border: 2px solid #ececec;
    padding-right: 6px;
}
.search input {
    flex: 1;
    border: 0;
    outline: 0;
    padding: 0 4px;
    height: 18px;
}
.search input::placeholder {
    color: #999;
}
.search .ico {
    stroke: #bbb;
    width: 18px;
}
.avatar {
    width: 20px;
    height: 20px;
}
.user {
    margin: 0 12px 0 -8px;
}
.help {
    display: flex;
    align-items: center;
    font-size: 18px;
    color: #56617a;
}
.help .caret {
    border-width: 4px 3px 0;
}

/* ribbon */
.ribbon {
    display: flex;
    flex: none;
    height: 122px;
    overflow: hidden;
}
.group {
    position: relative;
    flex: none;
    display: flex;
    flex-direction: column;
    padding: 4px 0 0 10px;
}
.group::after {
    content: "";
    position: absolute;
    right: 0;
    top: 3px;
    bottom: 5px;
    width: 1px;
    background: #dcdcdc;
}
.group-body {
    display: grid;
    height: 86px;
}
.group-label {
    display: flex;
    align-items: center;
    justify-content: center;
    gap: 7px;
    height: 32px;
    padding-right: 10px;
}
.group-label .caret {
    border-left-width: 5px;
    border-right-width: 5px;
}
.group-label.low {
    padding-top: 4px;
}
.g-select { width: 291px; }
.g-select .group-body { grid-template-columns: 56px 122px 1fr; }
.g-sheet { width: 243px; }
.g-sheet .group-body { grid-template-columns: 99px 1fr; }
.g-common { width: 345px; }
.g-common .group-body { grid-template-columns: 84px 138px 1fr; }
.g-modify { width: 296px; }
.g-modify .group-body { grid-template-columns: 67px 67px 78px 1fr; }
.g-draw { width: 84px; }
.g-draw .group-body { grid-template-columns: 39px 1fr; }
.g-detect { width: 112px; }
.g-smart { width: 98px; }
.g-slab { width: 393px; }
.g-slab .group-body { grid-template-columns: 108px 126px 1fr; }
.col {
    display: flex;
    flex-direction: column;
    align-items: flex-start;
    gap: 1px;
}
.cmd {
    display: flex;
    align-items: center;
    gap: 4px;
    height: 28px;
}
.cmd .caret {
    margin-left: 4px;
}
.g-draw .cmd .caret {
    margin-left: 0;
}
.cmd.on {
    width: 26px;
    height: 24px;
    margin: 2px 0 0 -3px;
    padding-left: 3px;
    border-radius: 4px;
    background: #c2daf4;
}
.big {
    display: flex;
    flex-direction: column;
    align-items: center;
    width: 50px;
    padding-top: 6px;
    gap: 5px;
}
.big svg {
    width: 28px;
    height: 36px;
    fill: none;
}
.g-detect, .g-smart {
    padding-left: 5px;
}
.g-detect .big {
    width: 58px;
}
.g-detect .big svg {
    width: 36px;
}
.g-smart .big {
    width: 70px;
    gap: 3px;
    padding-top: 3px;
}
.g-smart .big svg {
    width: 40px;
    height: 40px;
}
.g-smart .big .caret {
    margin-top: 5px;
}
.g-modify {
    padding-left: 12px;
}
.g-detect .group-label, .g-smart .group-label {
    padding-right: 4px;
}

/* pickers */
.options {
    display: flex;
    align-items: center;
    flex: none;
    gap: 4px;
    height: 34px;
    padding: 0 0 2px 3px;
    border-top: 1px solid #d8d8d8;
    background: #f0f0f0;
}
.pick {
    position: relative;
    width: 124px;
}
.pick.short {
    width: 70px;
}
.pick select {
    appearance: none;
    width: 100%;
    height: 28px;
    padding: 0 3px;
    border: 1px solid #e2e2e2;
    border-radius: 4px;
    background: #fff;
}
.pick::after {
    content: "";
    position: absolute;
    right: 6px;
    top: 12px;
    border: 3px solid transparent;
    border-top: 4px solid #56617a;
    border-bottom: 0;
}
.offset {
    display: flex;
    align-items: center;
    gap: 2px;
    color: #888;
}
.spin {
    position: relative;
}
.spin input {
    display: block;
    width: 76px;
    height: 28px;
    padding: 0 3px;
    border: 1px solid #e2e2e2;
    border-radius: 4px;
    color: #999;
}
.spin::before, .spin::after {
    content: "";
    position: absolute;
    right: 6px;
    border: 3px solid transparent;
}
.spin::before {
    top: 3px;
    border-bottom: 4px solid #56617a;
}
.spin::after {
    bottom: 3px;
    border-top: 4px solid #56617a;
}

/* panels */
.work {
    flex: 1;
    min-height: 0;
    display: grid;
    grid-template-columns: 262px 355px 5px 1fr;
}
.panel {
    position: relative;
    overflow: hidden;
    border: 1px solid #dcdcdc;
    background: #fff;
}
.strip {
    display: flex;
    align-items: center;
    justify-content: flex-end;
    height: 15px;
    padding-right: 4px;
    background: #e6e6e6;
    border-bottom: 1px solid #d8d8d8;
}
.strip svg {
    display: block;
    width: 10px;
    height: 10px;
    stroke: #999;
}
.navpanel h2 {
    margin: 0;
    height: 27px;
    padding: 2px 10px;
    font-size: 15px;
    font-weight: 400;
    color: #666;
    background: #f0f0f0;
    border-bottom: 1px solid #ddd;
}
.navtools {
    display: flex;
    align-items: center;
    gap: 5px;
    height: 35px;
    padding: 0 1px 0 7px;
    border-bottom: 1px solid #ddd;
}
.navtools .plus {
    margin-right: auto;
}
.toggle {
    display: flex;
    justify-content: center;
    align-items: center;
    width: 30px;
    height: 27px;
    border-radius: 4px;
    background: #c5daf2;
}
.tree {
    padding-top: 2px;
}
.tree button {
    display: flex;
    align-items: center;
    height: 30px;
    padding-left: 29px;
    position: relative;
}
.tree button::before {
    content: "";
    position: absolute;
    left: 15px;
    border: 5px solid transparent;
    border-left: 5px solid #808080;
    border-right: 0;
}
.tree button.open::before {
    left: 12px;
    border: 5px solid transparent;
    border-top: 5px solid #808080;
    border-bottom: 0;
}
.tree li li {
    height: 30px;
    padding-top: 2px;
}
.tree a {
    display: flex;
    align-items: center;
    gap: 8px;
    position: relative;
    width: 139px;
    height: 26px;
    margin-left: 50px;
    padding-left: 4px;
    border-radius: 3px;
}
.tree .ico {
    width: 19px;
    height: 19px;
}
.tree .selected a {
    background: #c5daf2;
}
.dot {
    position: absolute;
    left: 19px;
    top: 1px;
    width: 8px;
    height: 8px;
    border-radius: 50%;
    background: #f00;
}
.vthumb {
    position: absolute;
    right: 4px;
    top: 158px;
    width: 10px;
    height: 514px;
    border-radius: 5px;
    background: #ccc;
}
.side {
    display: flex;
    flex-direction: column;
    gap: 6px;
    padding-left: 5px;
}
.layers {
    flex: 1;
}
.tabs {
    display: flex;
    height: 27px;
    background: #f0f0f0;
    border-bottom: 1px solid #d8d8d8;
}
.tabs button {
    width: 81px;
    background: #e0e0e0;
    color: #888;
    border-right: 1px solid #c8ccd4;
}
.tabs .active {
    background: #f0f0f0;
    color: #222;
}
.tools {
    display: flex;
    align-items: center;
    gap: 10px;
    height: 35px;
    padding-left: 5px;
}
.tools .cmd {
    gap: 6px;
}
.layers .tools {
    gap: 15px;
    height: 34px;
}
table {
    border-collapse: collapse;
    table-layout: fixed;
}
th, td {
    height: 26px;
    padding: 0 4px;
    border: 1px solid #dcdcdc;
    text-align: left;
    font-weight: 400;
    line-height: 20px;
    white-space: nowrap;
}
th {
    text-align: center;
}
.sheet-scroll {
    position: relative;
    height: 208px;
    overflow: hidden;
}
.sheet-table {
    width: 331px;
}
.sheet-table th {
    height: 32px;
    border-left: 0;
}
.sheet-table .sorted {
    background: #7fb8f8;
    color: #fff;
    font-weight: 700;
}
.c-name { width: 214px; }
.c-lock { width: 45px; }
.sheet-table td {
    border-left: 0;
}
.sheet-table td:last-child, .sheet-table th:last-child {
    border-right: 0;
}
.sheet-table tbody td:first-child {
    position: relative;
    padding-left: 39px;
}
.sheet-table tbody .floor td:first-child {
    padding-left: 27px;
}
.sheet-table tr:not(.floor) td:first-child::before {
    content: "";
    position: absolute;
    left: 11px;
    top: 0;
    height: 26px;
    border-left: 1px solid #dcdcdc;
}
.sheet-table tr.last td:first-child::before {
    height: 13px;
}
.sheet-table tr:not(.floor) td:first-child::after {
    content: "";
    position: absolute;
    left: 11px;
    top: 13px;
    width: 20px;
    border-top: 1px solid #dcdcdc;
}
.sheet-table td .ico {
    margin: 0 auto;
}
.current td {
    background: #d6e8fd;
}
.current td:first-child {
    outline: 2px solid #808080;
    outline-offset: -2px;
}
.fold {
    position: absolute;
    left: 3px;
    top: 5px;
    width: 16px;
    height: 16px;
    border: 1px solid #999;
    border-radius: 2px;
    background: #fff;
    line-height: 12px;
}
.vbar {
    position: absolute;
    right: 4px;
    top: 18px;
    width: 10px;
    height: 19px;
    border-radius: 5px;
    background: #ccc;
}
.hbar {
    display: flex;
    align-items: center;
    gap: 6px;
    height: 16px;
    padding: 0 24px 0 6px;
}
.hbar span {
    width: 196px;
    height: 10px;
    margin-right: auto;
    border-radius: 5px;
    background: #ccc;
}
.hbar i {
    border: 4px solid transparent;
}
.hbar .left {
    border-right: 5px solid #56617a;
    border-left: 0;
}
.hbar .right {
    border-left: 5px solid #56617a;
    border-right: 0;
}
.layer-table {
    width: 100%;
}
.c-on { width: 63px; }
.c-color { width: 45px; }
.layer-table td:first-child {
    text-align: center;
}
.layer-table input {
    appearance: none;
    position: relative;
    display: block;
    width: 18px;
    height: 18px;
    margin: 0 auto;
    border-radius: 2px;
    background: #2a80e8;
}
.layer-table input:checked::after {
    content: "";
    position: absolute;
    left: 6px;
    top: 2px;
    width: 6px;
    height: 11px;
    border: solid #fff;
    border-width: 0 2px 2px 0;
    transform: rotate(45deg);
}
.fold-arrow {
    display: block;
    width: 0;
    margin: 0 auto 0 20px;
    border: 4px solid transparent;
    border-left: 5px solid #888;
    border-right: 0;
}
.splitter {
    display: flex;
    align-items: center;
}
.splitter button {
    width: 5px;
    height: 125px;
    background: #5d6a79;
    display: flex;
    align-items: center;
}
.splitter button::before {
    content: "";
    border: 4px solid transparent;
    border-right: 4px solid #ccc;
    border-left: 0;
}

/* drawing */
.stage {
    position: relative;
    overflow: hidden;
    background: #000;
}
.plan {
    display: block;
    width: 100%;
    height: 100%;
}
.truss {
    fill: none;
    stroke: #c8c8c8;
    stroke-width: 1.4;
}
.hatch {
    fill: none;
    stroke: #e810e8;
    stroke-width: 1.3;
}
.specks {
    stroke: #90108a;
}
.wall {
    fill: none;
    stroke: #dcdc00;
    stroke-width: 1.5;
}
.window {
    stroke: #5c5cb8;
    stroke-width: 2;
}
.bubble {
    fill: none;
    stroke: #0a800a;
    stroke-width: 1.3;
}
.axis-name {
    fill: #f4f4f4;
    font-size: 22px;
}
.ucs {
    font-family: "Liberation Sans", sans-serif;
    font-size: 19px;
}
.viewtools {
    position: absolute;
    right: 0;
    top: 1px;
    width: 41px;
    height: 307px;
    padding-top: 16px;
    display: flex;
    flex-direction: column;
    align-items: center;
    gap: 12px;
    border-radius: 4px 0 0 4px;
    background: #fff;
}
.viewtools .ico {
    width: 24px;
    height: 24px;
    overflow: visible;
    stroke-width: 1.5;
}
.viewtools .caret {
    margin: -2px 0;
    border-top-color: #56617a;
}
.viewtools hr {
    width: 28px;
    margin: -3px 0;
    border: 0;
    border-top: 1px solid #666;
}
.viewtools text {
    fill: #2080f0;
    stroke: none;
    font-size: 10px;
    font-weight: 700;
}
.meter {
    position: fixed;
    right: 0;
    bottom: 7px;
    width: 13px;
    height: 73px;
    border-radius: 5px 0 0 5px;
    background: #404858;
}
.meter::before {
    content: "";
    position: absolute;
    left: 5px;
    top: 17px;
    width: 5px;
    height: 49px;
    background: repeating-linear-gradient(#404858 0 1px, transparent 1px 3px), linear-gradient(#f08040, #e8d040, #80d870, #50d8c8);
}

/* status */
.status {
    display: flex;
    align-items: center;
    flex: none;
    height: 39px;
    padding: 0 0 2px 3px;
    background: linear-gradient(#fcfcfc 36px, #e8e8e8 36px);
}
.s-coord { width: 328px; }
.s-height { width: 104px; }
.s-level { width: 166px; }
.s-zero { width: 129px; }
.s-hidden { width: 128px; }
.snaps {
    display: flex;
    gap: 6px;
    margin-right: 7px;
}
.snaps button {
    display: flex;
    align-items: center;
    gap: 5px;
    height: 31px;
    padding: 0 4px;
    border: 1px solid #aaa;
    border-radius: 3px;
    background: #fff;
}
.snaps .on {
    border-color: #60a0f0;
    background: #d6e8fd;
}
```
